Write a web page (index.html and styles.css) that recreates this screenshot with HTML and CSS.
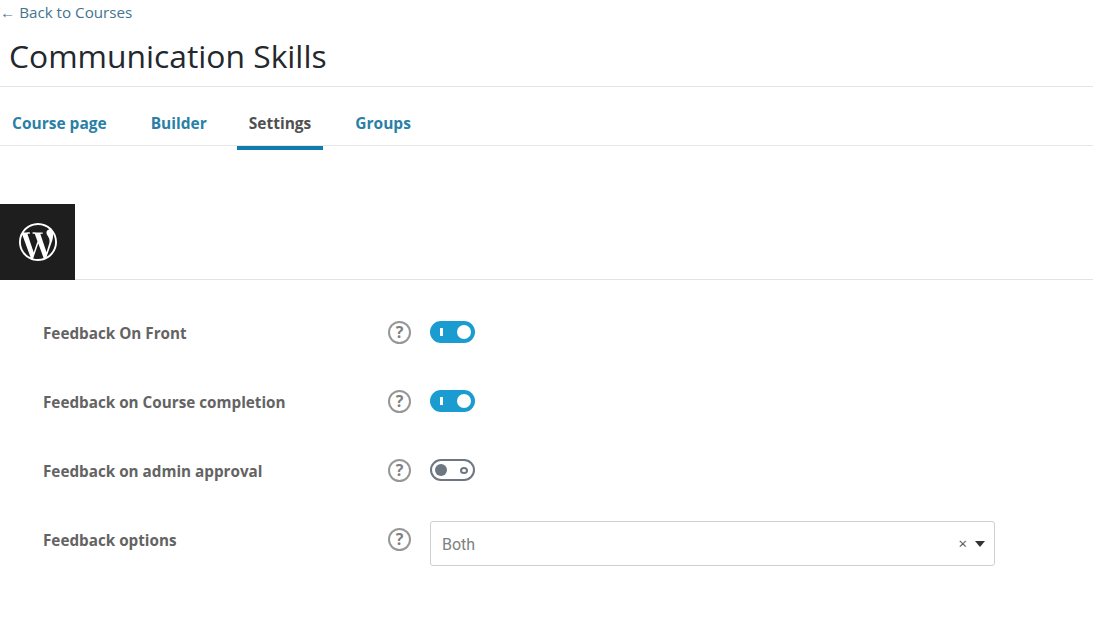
FILE: index.html
```html
<!DOCTYPE html>
<html lang="en">
<head>
<meta charset="utf-8">
<title>Communication Skills</title>
<link rel="stylesheet" href="styles.css">
</head>
<body>
<header class="head">
  <a class="back" href="#">← Back to Courses</a>
  <h1 class="title">Communication Skills</h1>
</header>
<nav class="tabs">
  <a class="tab" href="#">Course page</a>
  <a class="tab" href="#">Builder</a>
  <a class="tab active" href="#">Settings</a>
  <a class="tab" href="#">Groups</a>
</nav>
<section class="panel">
  <div class="panel-head">
    <div class="logo">
      <svg class="wp" viewBox="0 0 24 24"><path fill="#fff" d="M21.469 6.825c.84 1.537 1.318 3.3 1.318 5.175 0 3.979-2.156 7.456-5.363 9.325l3.295-9.527c.615-1.54.82-2.771.82-3.864 0-.405-.026-.78-.07-1.11m-7.981.105c.647-.03 1.232-.105 1.232-.105.582-.075.514-.93-.067-.899 0 0-1.755.135-2.88.135-1.064 0-2.85-.15-2.85-.15-.585-.03-.661.855-.075.885 0 0 .54.061 1.125.09l1.68 4.605-2.37 7.08L5.354 6.9c.649-.03 1.234-.1 1.234-.1.585-.075.516-.93-.065-.896 0 0-1.746.138-2.874.138-.2 0-.438-.008-.69-.015C4.911 3.15 8.235 1.215 12 1.215c2.809 0 5.365 1.072 7.286 2.833-.046-.003-.091-.009-.141-.009-1.06 0-1.812.923-1.812 1.914 0 .89.513 1.643 1.06 2.531.411.72.89 1.643.89 2.977 0 .915-.354 1.994-.821 3.479l-1.075 3.585-3.9-11.61.001.014zM12 22.784c-1.059 0-2.081-.153-3.048-.437l3.237-9.406 3.315 9.087c.024.053.05.101.078.149-1.12.393-2.325.609-3.582.609M1.211 12c0-1.564.336-3.05.935-4.39L7.29 21.709C3.694 19.96 1.212 16.271 1.211 12M12 0C5.385 0 0 5.385 0 12s5.385 12 12 12 12-5.385 12-12S18.615 0 12 0"/></svg>
    </div>
  </div>
  <div class="rows">
    <div class="row">
      <span class="label">Feedback On Front</span>
      <span class="help">?</span>
      <span class="toggle on"><i class="bar"></i><i class="knob"></i></span>
    </div>
    <div class="row">
      <span class="label">Feedback on Course completion</span>
      <span class="help">?</span>
      <span class="toggle on"><i class="bar"></i><i class="knob"></i></span>
    </div>
    <div class="row">
      <span class="label">Feedback on admin approval</span>
      <span class="help">?</span>
      <span class="toggle off"><i class="knob"></i><i class="ring"></i></span>
    </div>
    <div class="row">
      <span class="label">Feedback options</span>
      <span class="help">?</span>
      <div class="select">
        <span class="value">Both</span>
        <span class="clear">×</span>
        <span class="caret"></span>
      </div>
    </div>
  </div>
</section>
</body>
</html>
```

FILE: styles.css
```css
* { box-sizing: border-box; }
html, body { margin: 0; padding: 0; background: #fff; }
body { font-family: "Open Sans", "Noto Sans", sans-serif; overflow: hidden; }
a { text-decoration: none; }

.head { height: 87px; border-bottom: 1px solid #e3e3e3; }
.back { display: block; height: 25px; line-height: 25px; font-size: 15.2px; color: #44748f; }
.title { margin: 0; padding: 10px 0 0 9px; font-size: 31.8px; line-height: 42px; font-weight: 500; color: #23282d; }

.tabs { display: flex; height: 59px; border-bottom: 1px solid #e6e6e6; }
.tab { height: 63px; padding: 0 12px; margin-right: 20px; line-height: 73px; font-size: 15.5px; font-weight: 700; color: #2a7fa6; }
.tab:nth-child(2) { margin-right: 18px; }
.tab.active { color: #505050; border-bottom: 4px solid #0f7cab; }

.panel { padding-top: 58px; }
.panel-head { height: 76px; border-bottom: 1px solid #e3e3e3; }
.logo { width: 75px; height: 76px; background: #1e1e1e; display: flex; align-items: center; justify-content: center; }
.wp { width: 38px; height: 38px; }

.rows { padding: 18px 0 0 43px; }
.row { display: flex; align-items: center; height: 69px; }
.label { width: 345px; font-size: 15.25px; font-weight: 700; color: #636363; }
.help { width: 23px; height: 23px; margin-right: 19px; border: 2px solid #979797; border-radius: 50%; text-align: center; font-size: 16px; line-height: 19px; font-weight: 700; color: #808080; }

.toggle { position: relative; width: 45px; height: 22px; border-radius: 11px; display: block; margin-top: -1px; }
.toggle.on { background: #1a9cd0; }
.toggle.off { background: #fff; border: 2px solid #6c7781; }
.toggle i { position: absolute; display: block; }
.toggle .bar { left: 10px; top: 7px; width: 3px; height: 8px; background: #fff; }
.toggle.on .knob { right: 4px; top: 4px; width: 14px; height: 14px; border-radius: 50%; background: #fff; }
.toggle.off .knob { left: 3px; top: 3px; width: 12px; height: 12px; border-radius: 50%; background: #6c7781; }
.toggle.off .ring { right: 5px; top: 6px; width: 8px; height: 7px; border: 2px solid #6c7781; border-radius: 50%; }

.select { display: flex; align-items: center; width: 565px; height: 45px; margin-top: 8px; padding: 0 9px 0 11px; border: 1px solid #cfcfcf; border-radius: 3px; }
.value { flex: 1; padding-top: 1px; font-family: Roboto, "Open Sans", sans-serif; font-size: 16px; color: #808080; }
.clear { font-size: 15px; color: #555; margin-right: 8px; line-height: 1; }
.caret { width: 0; height: 0; border-left: 5.5px solid transparent; border-right: 5.5px solid transparent; border-top: 6px solid #333; }
```
